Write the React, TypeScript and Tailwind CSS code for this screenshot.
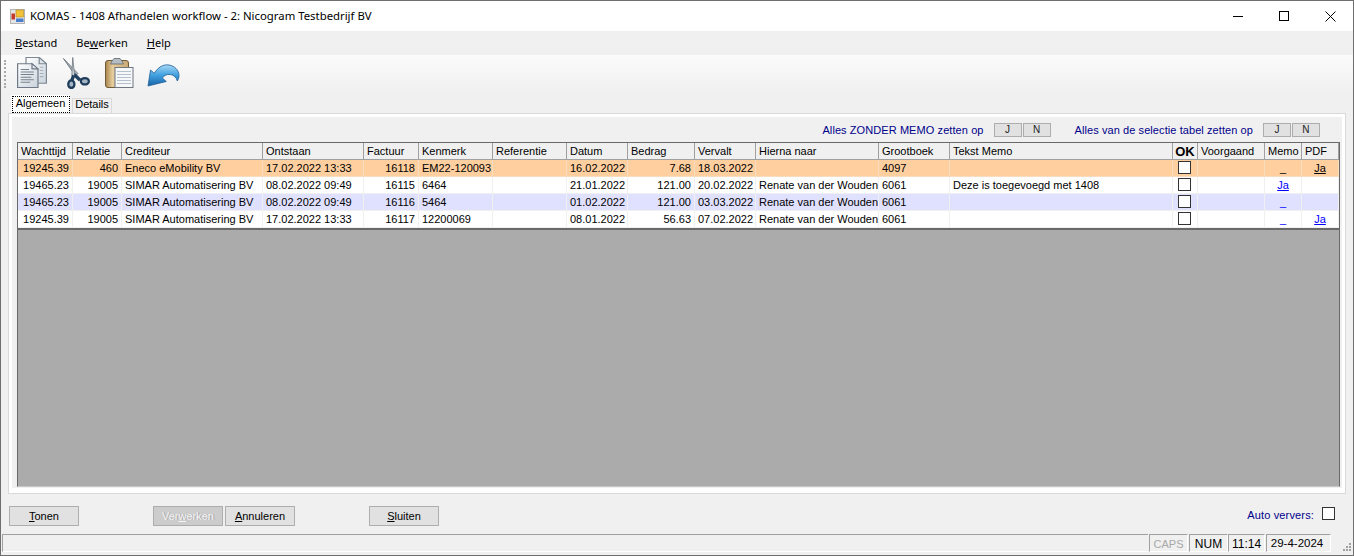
import React from 'react'

const gridCols =
  'grid grid-cols-[55px_49px_141px_101px_55px_74px_74px_61px_67px_61px_123px_71px_223px_25px_67px_37px_37px]'

const columns = [
  'Wachttijd', 'Relatie', 'Crediteur', 'Ontstaan', 'Factuur', 'Kenmerk', 'Referentie', 'Datum', 'Bedrag',
  'Vervalt', 'Hierna naar', 'Grootboek', 'Tekst Memo', 'OK', 'Voorgaand', 'Memo', 'PDF',
]

const rows = [
  { bg: 'bg-[#ffcf9f]', link: 'text-black', line: 'border-[#f8dcc0]', cells: ['19245.39', '460', 'Eneco eMobility BV', '17.02.2022 13:33', '16118', 'EM22-120093', '', '16.02.2022', '7.68', '18.03.2022', '', '4097', ''], memo: '_', pdf: 'Ja' },
  { bg: 'bg-white', link: 'text-[#0000ff]', line: 'border-[#f0f0f0]', cells: ['19465.23', '19005', 'SIMAR Automatisering BV', '08.02.2022 09:49', '16115', '6464', '', '21.01.2022', '121.00', '20.02.2022', 'Renate van der Wouden', '6061', 'Deze is toegevoegd met 1408'], memo: 'Ja', pdf: '' },
  { bg: 'bg-[#e0e0ff]', link: 'text-[#0000ff]', line: 'border-[#f0f0f0]', cells: ['19465.23', '19005', 'SIMAR Automatisering BV', '08.02.2022 09:49', '16116', '5464', '', '01.02.2022', '121.00', '03.03.2022', 'Renate van der Wouden', '6061', ''], memo: '_', pdf: '' },
  { bg: 'bg-white', link: 'text-[#0000ff]', line: 'border-[#f0f0f0]', cells: ['19245.39', '19005', 'SIMAR Automatisering BV', '17.02.2022 13:33', '16117', '12200069', '', '08.01.2022', '56.63', '07.02.2022', 'Renate van der Wouden', '6061', ''], memo: '_', pdf: 'Ja' },
]

const rightAligned = [0, 1, 4, 8]

function CopyIcon() {
  return (
    <svg width="30" height="31" viewBox="2 1 25 30" preserveAspectRatio="none">
      <defs>
        <linearGradient id="paper" x1="0" y1="0" x2="1" y2="1">
          <stop offset="0" stopColor="#ffffff" />
          <stop offset="1" stopColor="#c9d3dc" />
        </linearGradient>
      </defs>
      <path d="M9.5 1.5h11l6 6v19h-17z" fill="url(#paper)" stroke="#7d8894" />
      <path d="M20.5 1.5v6h6z" fill="#dfe5ea" stroke="#7d8894" />
      <path d="M2.5 7.5h12l5 5v18h-17z" fill="url(#paper)" stroke="#6f7a86" />
      <path d="M14.5 7.5v5h5z" fill="#e5e9ee" stroke="#6f7a86" />
      <path d="M5 13h7M5 15.5h11M5 18h11M5 20.500h9M5 23h11M5 25.500h8" stroke="#77818c" strokeWidth="1" />
      <path d="M21 11h3M21 14h3M21 17h3M21 20h3" stroke="#a6afb8" strokeWidth="1" />
    </svg>
  )
}

function ScissorsIcon() {
  return (
    <svg width="28" height="32" viewBox="0 0 30 33" preserveAspectRatio="none">
      <path d="M1.500 1.500 17 17l-2.500 2.500z" fill="#aeb6bd" stroke="#59636c" strokeWidth="0.8" />
      <path d="M11.500 0.500 13.500 19l-3 .5z" fill="#d3d8dc" stroke="#656f78" strokeWidth="0.8" />
      <path d="M14 16.500 21 23l-3 2-5.500-5z" fill="#22405f" />
      <path d="M11 18 14 20 12.500 24l-3.500-1z" fill="#22405f" />
      <ellipse cx="24.500" cy="25" rx="4.300" ry="3.300" fill="#a4b4c4" stroke="#1d3b5a" strokeWidth="2.400" />
      <ellipse cx="10" cy="28" rx="3.300" ry="4" fill="#a4b4c4" stroke="#1d3b5a" strokeWidth="2.400" />
    </svg>
  )
}

function ClipboardIcon() {
  return (
    <svg width="31" height="33" viewBox="0 0 31 33">
      <defs>
        <linearGradient id="board" x1="0" y1="0" x2="1" y2="0">
          <stop offset="0" stopColor="#a8834c" />
          <stop offset="0.3" stopColor="#e6cd9b" />
          <stop offset="1" stopColor="#c9a873" />
        </linearGradient>
      </defs>
      <rect x="1.500" y="4.500" width="23" height="27" rx="2.500" fill="url(#board)" stroke="#6f5a38" />
      <path d="M8 5 10 2.500h6L18 5l1.500 3h-13z" fill="#b5bcc2" stroke="#5f666d" strokeWidth="0.8" />
      <rect x="11" y="11.500" width="18" height="20" fill="#f5f7f9" stroke="#6e7780" />
      <path d="M13 15.500h14M13 18.500h14M13 21.500h14M13 24.500h14M13 27.500h14" stroke="#b4c0cb" />
    </svg>
  )
}

function UndoIcon() {
  return (
    <svg width="33" height="30" viewBox="0 0 33 30">
      <defs>
        <linearGradient id="arrow" x1="0" y1="0" x2="0" y2="1">
          <stop offset="0" stopColor="#a8d8f5" />
          <stop offset="0.5" stopColor="#3f9fdf" />
          <stop offset="1" stopColor="#1a62a8" />
        </linearGradient>
      </defs>
      <path
        d="M1 27 3.500 11l3.800 3.200C11 8.500 16 5 22 6c6 1 10 5.500 10 10.500 0 2-.6 3.800-1.700 5.500-.8-3.500-3.200-6-7-6.500-3.500-.5-6.200 1-8 3.500l4 3.500z"
        fill="url(#arrow)"
        stroke="#1f5f96"
        strokeWidth="0.8"
      />
    </svg>
  )
}

function AppIcon() {
  return (
    <svg width="15" height="15" viewBox="0 0 15 15">
      <rect x="0.500" y="0.500" width="14" height="14" fill="#e4e4e4" stroke="#b4b4b4" />
      <rect x="6" y="1" width="7.500" height="7" fill="#f2c23a" stroke="#b58a1a" strokeWidth="0.6" />
      <rect x="1.500" y="4.500" width="3.500" height="6" fill="#c43a2c" />
      <rect x="6" y="9.500" width="7.500" height="3.500" fill="#4a7fd0" />
    </svg>
  )
}

function Check({ className = '' }: { className?: string }) {
  return <div className={`w-[13px] h-[13px] border border-[#333333] bg-white ${className}`} />
}

function SmallButton({ label }: { label: string }) {
  return (
    <div className="w-[28px] h-[14px] bg-[#e1e1e1] border border-[#adadad] flex items-center justify-center text-[10px] leading-none text-[#222222]">
      {label}
    </div>
  )
}

function ActionButton({ children, disabled, className = '' }: { children: React.ReactNode; disabled?: boolean; className?: string }) {
  return (
    <div
      className={`w-[70px] h-[20px] border border-[#adadad] flex items-center justify-center text-[11px] ${
        disabled ? 'bg-[#cccccc] text-[#f4f4f4] [text-shadow:1px_0_0_#a6a6a6]' : 'bg-[#e1e1e1] text-black'
      } ${className}`}
    >
      {children}
    </div>
  )
}

function StatusPanel({ children, className = '' }: { children: React.ReactNode; className?: string }) {
  return (
    <div className={`h-[18px] pt-[2px] border-l border-t border-[#a0a0a0] border-r-white border-b-white border-r border-b flex items-center justify-center ${className}`}>
      {children}
    </div>
  )
}

export default function App() {
  return (
    <div className="w-[1354px] h-[556px] overflow-hidden flex flex-col bg-[#f0f0f0] border border-[#6f6f6f] text-black font-['Liberation_Sans',Arial,sans-serif] text-[11px] leading-none">
      {/* title bar */}
      <div className="h-[30px] shrink-0 bg-white flex items-center font-['Noto_Sans',sans-serif]">
        <div className="ml-[9px] mr-[5px] flex"><AppIcon /></div>
        <span className="text-[11.350px] text-black">KOMAS - 1408 Afhandelen workflow - 2: Nicogram Testbedrijf BV</span>
        <div className="ml-auto flex items-center">
          <div className="w-[46px] h-[30px] flex items-center justify-center">
            <div className="w-[10px] h-px bg-black" />
          </div>
          <div className="w-[46px] h-[30px] flex items-center justify-center">
            <div className="w-[10px] h-[10px] border border-black" />
          </div>
          <div className="w-[46px] h-[30px] flex items-center justify-center">
            <svg width="11" height="11" viewBox="0 0 11 11"><path d="M0.500 0.500l10 10M10.500 0.500l-10 10" stroke="#000" strokeWidth="1" /></svg>
          </div>
        </div>
      </div>

      {/* menu */}
      <div className="h-[24px] shrink-0 bg-[#f0f0f0] flex items-center pl-[14px] pb-[2px] gap-[19px] font-['Noto_Sans',sans-serif] text-[11px]">
        <span><u>B</u>estand</span>
        <span>Be<u>w</u>erken</span>
        <span><u>H</u>elp</span>
      </div>

      {/* toolbar */}
      <div className="h-[38px] shrink-0 bg-gradient-to-b from-[#fbfbfb] to-[#f0f0f0] flex items-center">
        <div className="ml-[3px] mr-[11px] h-[28px] w-[2px] border-l-2 border-dotted border-[#a8a8a8]" />
        <div className="flex items-center pb-[3px]">
          <CopyIcon />
          <div className="ml-[15px]"><ScissorsIcon /></div>
          <div className="ml-[14px]"><ClipboardIcon /></div>
          <div className="ml-[12px] mt-[3px]"><UndoIcon /></div>
        </div>
      </div>

      {/* tabs */}
      <div className="h-[20px] shrink-0 flex items-end pl-[10px] gap-[2px]">
        <div className="w-[59px] h-[18px] bg-white flex items-end justify-center">
          <div className="w-[58px] h-[17px] border border-dotted border-black flex items-center justify-center pb-[3px]">Algemeen</div>
        </div>
        <div className="w-[40px] h-[15px] pb-[4px] bg-[#f0f0f0] border border-[#d9d9d9] border-b-0 flex items-center justify-center">Details</div>
      </div>

      {/* tab page */}
      <div className="mx-[7px] h-[381px] shrink-0 border border-[#d9d9d9] bg-white pt-[3px] pl-[3px] pr-[3px] pb-[5px]">
        <div className="h-full bg-[#f0f0f0] pl-[5px] pr-[2px] flex flex-col">
          <div className="h-[25px] shrink-0 flex items-end pb-[5px] text-[#00008b] tracking-[0.08px]">
            <div className="ml-auto flex items-center">
              <span>Alles ZONDER MEMO zetten op</span>
              <div className="ml-[10px] flex gap-px"><SmallButton label="J" /><SmallButton label="N" /></div>
              <span className="ml-[24px]">Alles van de selectie tabel zetten op</span>
              <div className="ml-[10px] mr-[20px] flex gap-px"><SmallButton label="J" /><SmallButton label="N" /></div>
            </div>
          </div>

          {/* data grid */}
          <div className="h-[345px] w-[1323px] shrink-0 border border-[#696969] border-b-[#c8c8c8] bg-[#ababab] overflow-hidden">
            <div className={`${gridCols} h-[17px] bg-[#f0f0f0] border-b border-[#a0a0a0]`}>
              {columns.map((c) => (
                <div
                  key={c}
                  className={`border-r border-[#a0a0a0] flex items-center whitespace-nowrap ${
                    c === 'OK' ? 'justify-center font-bold text-[13px]' : 'pl-[3px] pt-px'
                  }`}
                >
                  {c}
                </div>
              ))}
            </div>
            {rows.map((row, i) => (
              <div key={i} className={`${gridCols} h-[17px] ${row.bg}`}>
                {row.cells.map((cell, j) => (
                  <div
                    key={j}
                    className={`border-r border-b ${row.line} flex items-center whitespace-nowrap overflow-hidden ${
                      rightAligned.includes(j) ? 'justify-end pr-[3px]' : 'pl-[3px]'
                    }`}
                  >
                    {cell}
                  </div>
                ))}
                <div className={`border-r border-b ${row.line} flex items-center justify-center pr-px`}><Check className="mb-px" /></div>
                <div className={`border-r border-b ${row.line}`} />
                <div className={`border-r border-b ${row.line} flex items-center justify-center ${row.link}`}>
                  {row.memo === 'Ja' ? <u>Ja</u> : <span>_</span>}
                </div>
                <div className={`border-r border-b ${row.line} flex items-center justify-center ${row.link}`}>
                  {row.pdf && <u>Ja</u>}
                </div>
              </div>
            ))}
            <div className="h-[2px] bg-[#696969]" />
          </div>
        </div>
      </div>

      {/* buttons */}
      <div className="h-[40px] shrink-0 flex items-start pt-[12px] pl-[8px] pr-[18px]">
        <ActionButton><span><u>T</u>onen</span></ActionButton>
        <ActionButton disabled className="ml-[74px]"><span>Ver<u>w</u>erken</span></ActionButton>
        <ActionButton className="ml-[2px]"><span><u>A</u>nnuleren</span></ActionButton>
        <ActionButton className="ml-[74px]"><span><u>S</u>luiten</span></ActionButton>
        <span className="ml-auto mt-[4px] text-[#00008b] tracking-[0.15px]">Auto ververs:</span>
        <Check className="ml-[8px] mt-px" />
      </div>

      {/* status bar */}
      <div className="h-[20px] shrink-0 flex items-start pl-px">
        <div className="w-[1146px] h-[18px] border-l border-t border-b border-[#a0a0a0] border-b-white" />
        <StatusPanel className="w-[39px] text-[#a8a8a8] ml-px">CAPS</StatusPanel>
        <StatusPanel className="w-[39px] ml-px text-[12px]">NUM</StatusPanel>
        <StatusPanel className="w-[37px] text-[12px]">11:14</StatusPanel>
        <StatusPanel className="w-[65px] ml-px pr-[3px] text-[11.500px]">29-4-2024</StatusPanel>
        <div className="ml-auto mr-[2px] mt-[9px] grid grid-cols-3 gap-px">
          <div className="w-[2px] h-[2px]" />
          <div className="w-[2px] h-[2px]" />
          <div className="w-[2px] h-[2px] bg-[#a0a0a0]" />
          <div className="w-[2px] h-[2px]" />
          <div className="w-[2px] h-[2px] bg-[#a0a0a0]" />
          <div className="w-[2px] h-[2px] bg-[#a0a0a0]" />
          <div className="w-[2px] h-[2px] bg-[#a0a0a0]" />
          <div className="w-[2px] h-[2px] bg-[#a0a0a0]" />
          <div className="w-[2px] h-[2px] bg-[#a0a0a0]" />
        </div>
      </div>
    </div>
  )
}
